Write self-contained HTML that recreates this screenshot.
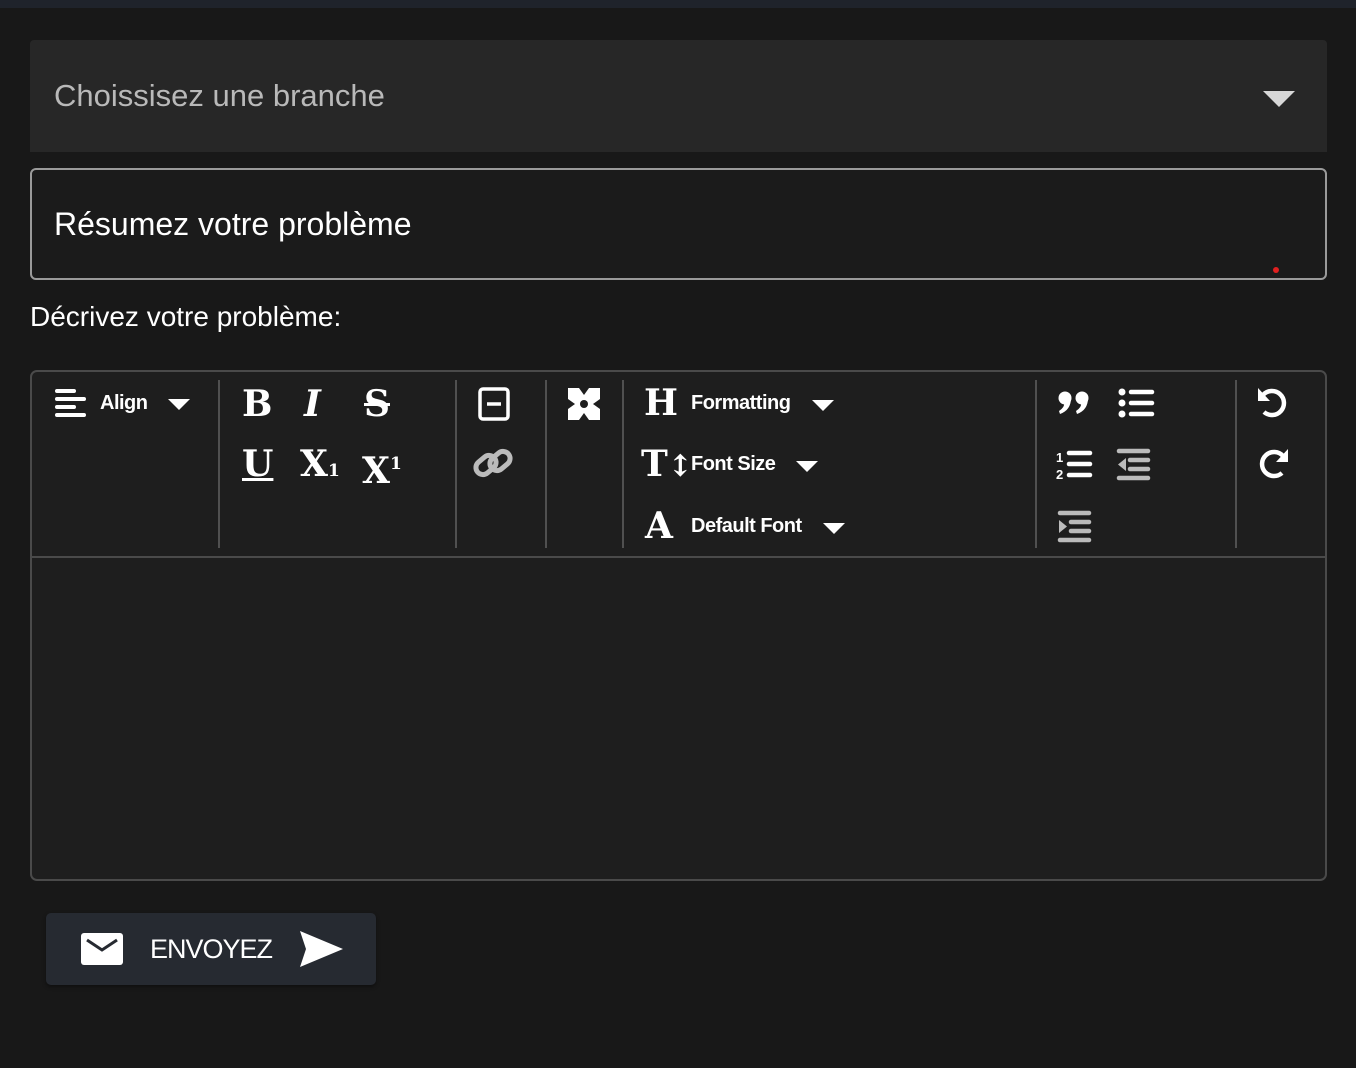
<!DOCTYPE html>
<html><head><meta charset="utf-8"><style>
*{margin:0;padding:0;box-sizing:border-box}
body{width:1356px;height:1068px;background:#181818;font-family:"Liberation Sans",sans-serif;position:relative;overflow:hidden;color:#fff}
.a{position:absolute}
.top{left:0;top:0;width:1356px;height:8px;background:#1f232b}
.sel{left:30px;top:40px;width:1297px;height:112px;background:#272727;border-radius:4px 4px 0 0}
.sel span{position:absolute;left:24px;top:38px;font-size:31px;color:#b9b9b9}
.inp{left:30px;top:168px;width:1297px;height:112px;border:2px solid #9a9a9a;border-radius:6px;background:#1b1b1b}
.inp span{position:absolute;left:22px;top:36px;font-size:32px;color:#fff}
.lbl{left:30px;top:301px;font-size:28px;color:#fff}
.ed{left:30px;top:370px;width:1297px;height:511px;border:2px solid #4a4a4a;border-radius:7px;background:#1e1e1e}
.hr{left:32px;top:556px;width:1293px;height:2px;background:#4a4a4a}
.sep{top:380px;width:2px;height:168px;background:#505050}
.t{font-size:20px;font-weight:bold;color:#fff;letter-spacing:-0.5px}
.tri{width:0;height:0;border-left:11px solid transparent;border-right:11px solid transparent;border-top:11px solid #fff}
.ic{font-family:"DejaVu Serif","Liberation Serif",serif;font-weight:bold;color:#fff;font-size:36px;line-height:36px}
.btn{left:46px;top:913px;width:330px;height:72px;background:#262a31;border-radius:5px;box-shadow:0 2px 4px rgba(0,0,0,.4)}
</style></head><body>
<div class="a top"></div>
<div class="a sel"><span>Choissisez une branche</span></div>
<div class="a" style="left:1263px;top:91px;width:0;height:0;border-left:16px solid transparent;border-right:16px solid transparent;border-top:16px solid #d8d8d8"></div>
<div class="a inp"><span>Résumez votre problème</span></div>
<div class="a" style="left:1273px;top:267px;width:6px;height:6px;border-radius:3px;background:#e02020"></div>
<div class="a lbl">Décrivez votre problème:</div>
<div class="a ed"></div>
<div class="a hr"></div>
<div class="a sep" style="left:218px"></div>
<div class="a sep" style="left:455px"></div>
<div class="a sep" style="left:545px"></div>
<div class="a sep" style="left:622px"></div>
<div class="a sep" style="left:1035px"></div>
<div class="a sep" style="left:1235px"></div>

<svg class="a" style="left:54px;top:388px" width="34" height="32"><g stroke="#fff" stroke-width="4" stroke-linecap="round"><line x1="3" y1="3" x2="20" y2="3"/><line x1="3" y1="11" x2="30" y2="11"/><line x1="3" y1="19" x2="20" y2="19"/><line x1="3" y1="27" x2="30" y2="27"/></g></svg>
<div class="a t" style="left:100px;top:392px">Align</div>
<div class="a tri" style="left:168px;top:399px"></div>

<div class="a ic" style="left:242px;top:386px">B</div>
<div class="a ic" style="left:304px;top:386px;font-style:italic">I</div>
<div class="a ic" style="left:364px;top:386px;text-decoration:line-through">S</div>
<div class="a ic" style="left:242px;top:446px;text-decoration:underline">U</div>
<div class="a ic" style="left:300px;top:446px">X<span style="font-size:17px">1</span></div>
<div class="a ic" style="left:362px;top:446px">X<span style="font-size:17px;vertical-align:14px">1</span></div>

<svg class="a" style="left:478px;top:387px" width="32" height="34"><rect x="2" y="2" width="28" height="30" rx="3" fill="none" stroke="#fff" stroke-width="3.5"/><line x1="9" y1="17" x2="23" y2="17" stroke="#fff" stroke-width="3.5"/></svg>
<svg class="a" style="left:472px;top:446px" width="42" height="34"><g fill="none" stroke="#bbb" stroke-width="5"><rect x="3" y="12" width="22" height="14" rx="7" transform="rotate(-40 14 19)"/><rect x="17" y="8" width="22" height="14" rx="7" transform="rotate(-40 28 15)"/></g></svg>

<svg class="a" style="left:567px;top:387px" width="34" height="34"><rect x="1" y="1" width="32" height="32" fill="#fff"/><g fill="#1e1e1e"><polygon points="12,1 22,1 17,8"/><polygon points="12,33 22,33 17,26"/><polygon points="1,12 1,22 8,17"/><polygon points="33,12 33,22 26,17"/><circle cx="17" cy="17" r="4"/></g></svg>

<div class="a ic" style="left:644px;top:385px">H</div>
<div class="a t" style="left:691px;top:392px">Formatting</div>
<div class="a tri" style="left:812px;top:400px"></div>
<div class="a ic" style="left:641px;top:446px">T<span style="font-size:30px">↕</span></div>
<div class="a t" style="left:691px;top:453px">Font Size</div>
<div class="a tri" style="left:796px;top:461px"></div>
<div class="a ic" style="left:645px;top:508px">A</div>
<div class="a t" style="left:691px;top:515px">Default Font</div>
<div class="a tri" style="left:823px;top:523px"></div>

<svg class="a" style="left:1058px;top:390px" width="34" height="26"><g fill="#fff"><circle cx="7" cy="8" r="6.5"/><path d="M13 8 Q13 20 2 24 L1 21 Q7 17 6 13 Z"/><circle cx="24" cy="8" r="6.5"/><path d="M30 8 Q30 20 19 24 L18 21 Q24 17 23 13 Z"/></g></svg>
<svg class="a" style="left:1118px;top:388px" width="38" height="32"><g fill="#fff"><circle cx="4" cy="4" r="3.5"/><circle cx="4" cy="15" r="3.5"/><circle cx="4" cy="26" r="3.5"/></g><g stroke="#fff" stroke-width="4.5" stroke-linecap="round"><line x1="13" y1="4" x2="34" y2="4"/><line x1="13" y1="15" x2="34" y2="15"/><line x1="13" y1="26" x2="34" y2="26"/></g></svg>
<svg class="a" style="left:1056px;top:448px" width="38" height="32"><text x="0" y="14" font-size="13" font-weight="bold" fill="#fff" font-family="Liberation Sans">1</text><text x="0" y="31" font-size="13" font-weight="bold" fill="#fff" font-family="Liberation Sans">2</text><g stroke="#fff" stroke-width="4.5" stroke-linecap="round"><line x1="13" y1="5" x2="34" y2="5"/><line x1="13" y1="16" x2="34" y2="16"/><line x1="13" y1="27" x2="34" y2="27"/></g></svg>
<svg class="a" style="left:1116px;top:448px" width="36" height="34"><g stroke="#bbb" stroke-width="4.5" stroke-linecap="round"><line x1="3" y1="3" x2="32" y2="3"/><line x1="14" y1="12" x2="32" y2="12"/><line x1="14" y1="21" x2="32" y2="21"/><line x1="3" y1="30" x2="32" y2="30"/></g><polygon points="10,10 10,23 2,16.5" fill="#bbb"/></svg>
<svg class="a" style="left:1057px;top:510px" width="36" height="34"><g stroke="#bbb" stroke-width="4.5" stroke-linecap="round"><line x1="3" y1="3" x2="32" y2="3"/><line x1="14" y1="12" x2="32" y2="12"/><line x1="14" y1="21" x2="32" y2="21"/><line x1="3" y1="30" x2="32" y2="30"/></g><polygon points="2,10 2,23 10,16.5" fill="#bbb"/></svg>

<svg class="a" style="left:1256px;top:386px" width="34" height="34"><path d="M7 9 A12 12 0 1 1 8 26" fill="none" stroke="#fff" stroke-width="4.5"/><polygon points="2,2 2,15 14,15" fill="#fff"/></svg>
<svg class="a" style="left:1256px;top:447px" width="34" height="34"><path d="M27 9 A12 12 0 1 0 26 26" fill="none" stroke="#fff" stroke-width="4.5"/><polygon points="32,2 32,15 20,15" fill="#fff"/></svg>

<div class="a btn"></div>
<svg class="a" style="left:81px;top:932px" width="42" height="34"><rect x="0" y="1" width="42" height="32" rx="3" fill="#fff"/><polyline points="6,8 21,18 36,8" fill="none" stroke="#262a31" stroke-width="3"/></svg>
<div class="a" style="left:150px;top:934px;font-size:27px;color:#fff;letter-spacing:-1px">ENVOYEZ</div>
<svg class="a" style="left:298px;top:930px" width="46" height="38"><polygon points="2,1 45,19 2,37 8,19" fill="#fff"/></svg>
</body></html>
